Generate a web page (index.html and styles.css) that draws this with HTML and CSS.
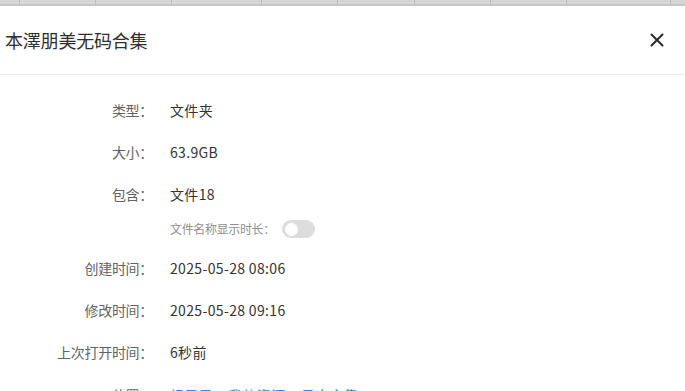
FILE: index.html
```html
<!DOCTYPE html>
<html lang="zh-CN">
<head>
<meta charset="utf-8">
<title>属性</title>
<link rel="stylesheet" href="styles.css">
</head>
<body>
<div class="backdrop">
  <span class="tab w20"></span>
  <span class="tab w76"></span>
  <span class="tab w76"></span>
  <span class="tab w90"></span>
  <span class="tab w76"></span>
  <span class="tab w77"></span>
  <span class="tab w76"></span>
  <span class="tab w76"></span>
  <span class="tab w104"></span>
  <span class="tab rest"></span>
</div>
<div class="dialog">
  <header class="dialog-head">
    <h1 class="title">本澤朋美无码合集</h1>
    <button class="close" aria-label="关闭">
      <svg width="14" height="14" viewBox="0 0 14 14"><path d="M1.5 1.5 L12.5 12.5 M12.5 1.5 L1.5 12.5" stroke="#2b2b2b" stroke-width="2" stroke-linecap="round" fill="none"/></svg>
    </button>
  </header>
  <div class="props">
    <div class="row"><span class="label">类型：</span><span class="value">文件夹</span></div>
    <div class="row"><span class="label">大小：</span><span class="value">63.9GB</span></div>
    <div class="row"><span class="label">包含：</span><span class="value">文件18</span></div>
    <div class="sub-row"><span class="label"></span><span class="sub-value"><span class="sub-label">文件名称显示时长：</span><span class="switch"><span class="knob"></span></span></span></div>
    <div class="row"><span class="label">创建时间：</span><span class="value">2025-05-28 08:06</span></div>
    <div class="row"><span class="label">修改时间：</span><span class="value">2025-05-28 09:16</span></div>
    <div class="row"><span class="label">上次打开时间：</span><span class="value">6秒前</span></div>
    <div class="row last"><span class="label">位置：</span><span class="value link">根目录 &gt; 我的资源 &gt; 日本合集</span></div>
  </div>
</div>
</body>
</html>
```
FILE: styles.css
```css
html, body {
  margin: 0;
  padding: 0;
  background: #ffffff;
  overflow: hidden;
}
body {
  width: 685px;
  height: 391px;
  font-family: "Noto Sans CJK SC", "Noto Sans", sans-serif;
}
.backdrop {
  display: flex;
  height: 4px;
  background: #d6d6d6;
  border-bottom: 2px solid #c6c6c6;
}
.tab {
  border-right: 1px solid #bdbdbd;
  flex: none;
}
.w20 { width: 19px; }
.w76 { width: 75px; }
.w77 { width: 76px; }
.w90 { width: 89px; }
.w104 { width: 103px; }
.rest { flex: 1; border-right: none; }
.dialog {
  background: #fff;
}
.dialog-head {
  display: flex;
  align-items: center;
  justify-content: space-between;
  height: 68px;
  border-bottom: 1px solid #ebebeb;
  padding: 0 21px 0 5px;
}
.title {
  margin: 0;
  font-size: 18px;
  font-weight: 400;
  color: #2f2f2f;
  line-height: 24px;
  letter-spacing: -0.2px;
}
.close {
  border: 0;
  background: none;
  padding: 0;
  width: 14px;
  height: 14px;
  display: flex;
}
.props {
  padding-top: 14px;
}
.row, .sub-row {
  display: grid;
  grid-template-columns: 153px 1fr;
  column-gap: 17px;
  align-items: center;
}
.row {
  height: 42px;
  font-size: 14px;
  line-height: 20px;
}
.row.last {
  margin-top: 1px;
}
.sub-row {
  height: 28px;
  margin-bottom: 4px;
}
.label {
  text-align: right;
  color: #636363;
  letter-spacing: -0.3px;
}
.value {
  color: #333333;
  letter-spacing: 0.35px;
}
.link {
  color: #2d8cf0;
}
.sub-value {
  display: flex;
  align-items: center;
}
.sub-label {
  font-size: 12px;
  line-height: 16px;
  color: #8f8f8f;
  letter-spacing: -0.35px;
  margin-right: 7px;
}
.switch {
  display: inline-flex;
  align-items: center;
  width: 33px;
  height: 18px;
  border-radius: 9px;
  background: #dddddd;
  padding: 0 3px;
  box-sizing: border-box;
}
.knob {
  width: 13px;
  height: 13px;
  border-radius: 50%;
  background: #fff;
}
```
